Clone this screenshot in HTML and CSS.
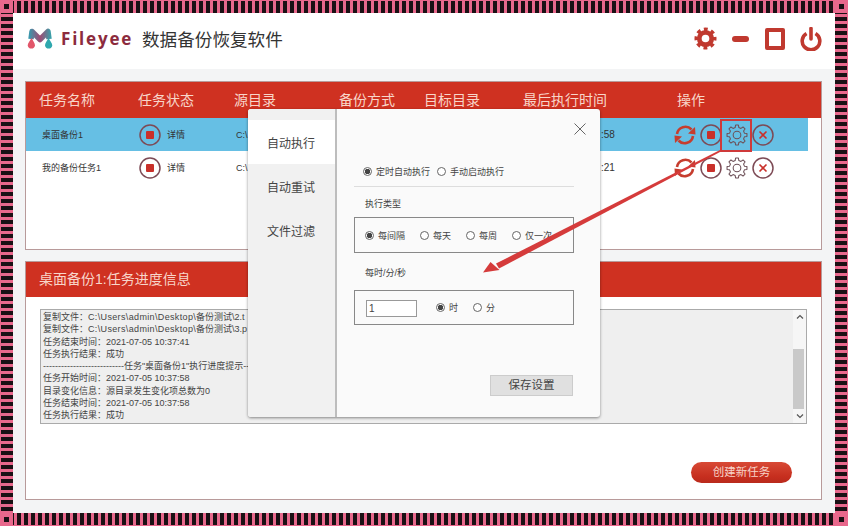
FILE: index.html
```html
<!DOCTYPE html>
<html lang="zh-CN">
<head>
<meta charset="utf-8">
<title>Fileyee 数据备份恢复软件</title>
<link rel="stylesheet" href="styles.css">
</head>
<body>
<svg class="defs">
	<symbol id="i-refresh" viewBox="0 0 22 22">
		<path d="M3 10A8.4 8.4 0 0 1 17.5 5.5M19 12A8.4 8.4 0 0 1 4.5 16.5" fill="none" stroke="#c63d2e" stroke-width="2.6"/>
		<path d="M14 9.5L21.5 10.5 21 3zM8 12.500L.5 11.500 1 19z" fill="#c63d2e"/>
	</symbol>
	<symbol id="i-stop" viewBox="0 0 22 22">
		<circle cx="11" cy="11" r="10" fill="none" stroke="#7d4a55" stroke-width="1.500"/>
		<rect x="7" y="7" width="8" height="8" rx="1" fill="#c9302a"/>
	</symbol>
	<symbol id="i-gear" viewBox="-11.500 -11.500 23 23">
		<path d="M10.4 1.460L7.760 1.940 6.860 4.120 8.390 6.320 6.320 8.390 4.120 6.860 1.940 7.760 1.460 10.400-1.460 10.400-1.940 7.760-4.120 6.860-6.320 8.390-8.390 6.320-6.860 4.120-7.760 1.940-10.400 1.460-10.400-1.460-7.760-1.940-6.860-4.120-8.390-6.320-6.320-8.390-4.120-6.860-1.940-7.760-1.460-10.400 1.460-10.400 1.940-7.760 4.120-6.860 6.320-8.390 8.390-6.320 6.860-4.120 7.760-1.940 10.400-1.460z" fill="none" stroke="#6d5058" stroke-width="1.100" stroke-linejoin="round"/>
		<circle r="4" fill="none" stroke="#6d5058" stroke-width="1.100"/>
	</symbol>
	<symbol id="i-close" viewBox="0 0 22 22">
		<circle cx="11" cy="11" r="10" fill="none" stroke="#7d4a55" stroke-width="1.500"/>
		<path d="M7.500 7.500L14.500 14.500M14.500 7.500L7.500 14.500" stroke="#c9302a" stroke-width="1.600"/>
	</symbol>
	<symbol id="i-up" viewBox="0 0 8 6">
		<path d="M1 4.500L4 1.500 7 4.500" fill="none" stroke="#555" stroke-width="1.200"/>
	</symbol>
	<symbol id="i-down" viewBox="0 0 8 6">
		<path d="M1 1.500L4 4.500 7 1.500" fill="none" stroke="#555" stroke-width="1.200"/>
	</symbol>
</svg>

<div class="frame">
	<div class="app">
		<div class="topbar">
			<svg class="logo" viewBox="0 0 28 24">
				<defs>
					<linearGradient id="logoM" gradientUnits="userSpaceOnUse" x1="2" y1="0" x2="26" y2="0">
						<stop offset="0" stop-color="#2f9fb2"/>
						<stop offset=".5" stop-color="#a04a74"/>
						<stop offset="1" stop-color="#2fa8ae"/>
					</linearGradient>
				</defs>
				<path d="M5 12L6 4.500 14 12.500 22 4.500 23 12" fill="none" stroke="url(#logoM)" stroke-width="5.500" stroke-linejoin="round"/>
				<path d="M5.500 11C7 14 9 16 9 18.500A3.700 3.700 0 0 1 1.700 18.500C1.700 16 4 14 5.500 11z" fill="#e2566a"/>
				<path d="M22.500 11C24 14 26.300 16 26.300 18.500A3.700 3.700 0 0 1 19 18.500C19 16 21 14 22.500 11z" fill="#2fa8ae"/>
			</svg>
			<span class="brand">Fileyee</span>
			<span class="app-title">数据备份恢复软件</span>
			<div class="win-btns">
				<svg class="win-gear" viewBox="-12 -12 24 24">
					<circle r="6.500" fill="none" stroke="#c0392f" stroke-width="5"/>
					<circle r="9.500" fill="none" stroke="#c0392f" stroke-width="4" stroke-dasharray="3.900 3.560" stroke-dashoffset="1.950"/>
				</svg>
				<span class="win-min"></span>
				<span class="win-max"></span>
				<svg class="win-power" viewBox="0 0 22 24">
					<path d="M6.500 6.500A8.800 8.800 0 1 0 15.500 6.500" fill="none" stroke="#c0392f" stroke-width="3.600"/>
					<path d="M11 1.500V12" stroke="#c0392f" stroke-width="3.600" stroke-linecap="round"/>
				</svg>
			</div>
		</div>

		<div class="content">
			<div class="panel task-panel">
				<div class="cols head">
					<span>任务名称</span><span>任务状态</span><span>源目录</span><span>备份方式</span><span>目标目录</span><span>最后执行时间</span><span>操作</span>
				</div>
				<div class="cols row on">
					<span class="name">桌面备份1</span>
					<span class="status"><svg class="ico"><use href="#i-stop"/></svg>详情</span>
					<span class="path">C:\</span>
					<span></span>
					<span></span>
					<span class="time">:58</span>
					<span class="ops">
						<svg class="ico"><use href="#i-refresh"/></svg>
						<svg class="ico"><use href="#i-stop"/></svg>
						<span class="gear-wrap"><svg class="ico"><use href="#i-gear"/></svg><i class="mark"></i></span>
						<svg class="ico"><use href="#i-close"/></svg>
					</span>
				</div>
				<div class="cols row">
					<span class="name">我的备份任务1</span>
					<span class="status"><svg class="ico"><use href="#i-stop"/></svg>详情</span>
					<span class="path">C:\</span>
					<span></span>
					<span></span>
					<span class="time">:21</span>
					<span class="ops">
						<svg class="ico"><use href="#i-refresh"/></svg>
						<svg class="ico"><use href="#i-stop"/></svg>
						<svg class="ico"><use href="#i-gear"/></svg>
						<svg class="ico"><use href="#i-close"/></svg>
					</span>
				</div>
			</div>

			<div class="panel log-panel">
				<div class="log-head">桌面备份1:任务进度信息</div>
				<div class="log-box">
					<div class="log-text">
						<p>复制文件：<span class="file">C:\Users\admin\Desktop\</span>备份测试\2.t</p>
						<p>复制文件：<span class="file">C:\Users\admin\Desktop\</span>备份测试\3.p</p>
						<p>任务结束时间：2021-07-05 10:37:41</p>
						<p>任务执行结果：成功</p>
						<p>---------------------------任务"桌面备份1"执行进度提示--</p>
						<p>任务开始时间：2021-07-05 10:37:58</p>
						<p>目录变化信息：源目录发生变化项总数为0</p>
						<p>任务结束时间：2021-07-05 10:37:58</p>
						<p>任务执行结果：成功</p>
					</div>
					<div class="scroll">
						<svg class="scroll-btn"><use href="#i-up"/></svg>
						<div class="track"><div class="thumb"></div></div>
						<svg class="scroll-btn"><use href="#i-down"/></svg>
					</div>
				</div>
				<div class="log-foot"><a class="create-btn">创建新任务</a></div>
			</div>
		</div>
	</div>

	<div class="modal">
		<div class="side">
			<div class="tab on">自动执行</div>
			<div class="tab">自动重试</div>
			<div class="tab">文件过滤</div>
		</div>
		<div class="main">
			<svg class="close-x" viewBox="0 0 12 12"><path d="M.5 .5L11.500 11.500M11.500 .5L.5 11.500" stroke="#666" stroke-width="1"/></svg>
			<div class="radios mode">
				<label><i class="radio on"></i>定时自动执行</label>
				<label><i class="radio"></i>手动启动执行</label>
			</div>
			<div class="line"></div>
			<div class="label">执行类型</div>
			<div class="group type">
				<label><i class="radio on"></i>每间隔</label>
				<label><i class="radio"></i>每天</label>
				<label><i class="radio"></i>每周</label>
				<label><i class="radio"></i>仅一次</label>
			</div>
			<div class="label second">每时/分/秒</div>
			<div class="group every">
				<span class="num">1</span>
				<label><i class="radio on"></i>时</label>
				<label><i class="radio"></i>分</label>
			</div>
			<a class="save-btn">保存设置</a>
		</div>
	</div>

	<svg class="arrow" viewBox="0 0 848 526">
		<path d="M720 150L721 151.500 499 268.500 496 263.500z" fill="#d53b3b"/>
		<path d="M483 272.500L490.500 262 499.500 270z" fill="#d53b3b"/>
	</svg>
</div>
</body>
</html>
```

FILE: styles.css
```css
*{margin:0; padding:0; box-sizing:border-box; list-style:none;}
body{width:848px; height:526px; overflow:hidden; font-family:"Liberation Sans","Noto Sans CJK SC",sans-serif; color:#444;}
.defs{position:absolute; width:0; height:0;}

/* striped picture border */
.frame{
	position:relative; width:848px; height:526px; padding:13px;
	background:
		linear-gradient(#1a1014,#1a1014) 4px 4px/5px 5px no-repeat,
		linear-gradient(#1a1014,#1a1014) 839px 4px/5px 5px no-repeat,
		linear-gradient(#1a1014,#1a1014) 4px 517px/5px 5px no-repeat,
		linear-gradient(#1a1014,#1a1014) 839px 517px/5px 5px no-repeat,
		linear-gradient(#e8688c,#e8688c) 0 0/13px 13px no-repeat,
		linear-gradient(#e8688c,#e8688c) 835px 0/13px 13px no-repeat,
		linear-gradient(#e8688c,#e8688c) 0 513px/13px 13px no-repeat,
		linear-gradient(#e8688c,#e8688c) 835px 513px/13px 13px no-repeat,
		repeating-linear-gradient(90deg,#e8688c 0 3px,#1a1014 3px 7px) 0 1px/100% 12px no-repeat,
		repeating-linear-gradient(90deg,#e8688c 0 3px,#1a1014 3px 7px) 0 513px/100% 12px no-repeat,
		repeating-linear-gradient(180deg,#e8688c 0 3px,#1a1014 3px 7px) 1px 0/12px 100% no-repeat,
		repeating-linear-gradient(180deg,#e8688c 0 3px,#1a1014 3px 7px) 835px 0/12px 100% no-repeat,
		#e8688c;
}
.app{height:500px; background:#f3f4f5; display:flex; flex-direction:column;}

.topbar{height:56px; background:#fff; display:flex; align-items:center; padding:0 0 5px 13px;}
.logo{width:28px; height:24px;}
.brand{margin-left:7px; width:81px; font:bold 17px "Open Sans",sans-serif; letter-spacing:1.800px; color:#8c2b3d;}
.app-title{font-size:17.600px; color:#333;}
.win-btns{margin-left:auto; display:flex; align-items:center; padding-right:13px;}
.win-gear{width:23px; height:23px;}
.win-min{width:17px; height:6px; margin-left:15px; background:#c0392f; border-radius:3px;}
.win-max{width:20px; height:22px; margin-left:16px; border:4px solid #c0392f; border-radius:2px;}
.win-power{width:22px; height:24px; margin-left:15px;}

.content{flex:1; display:flex; flex-direction:column; gap:11px; padding:12px 13px 13px 12px;}
.panel{background:#fff; border:1px solid #b89a9a;}
.task-panel{height:169px;}
.log-panel{height:239px;}

.cols{display:grid; grid-template-columns:99px 96px 105px 85px 99px 154px 1fr; align-items:center; padding-left:13px;}
.head{height:36px; padding-bottom:3px; background:#cf3121; color:#f8d6ca; font-size:14px;}
.row{height:33px; margin-right:13px; font-size:9px; color:#333;}
.row.on{background:#66bfe4;}
.name{padding-left:3px;}
.status{display:flex; align-items:center; gap:6px; padding-left:1px;}
.path{padding-left:2px;}
.time{padding-left:78px; font-size:10px;}
.ops{display:flex; gap:4px; margin-left:-3px;}
.ico{display:block; width:22px; height:22px;}
.gear-wrap{position:relative; display:block;}
.mark{position:absolute; left:-6px; right:-4px; top:-5px; bottom:-6px; border:2px solid #cf3a3a;}

.log-head{height:35px; padding:0 13px; background:#cf3121; color:#f8d6ca; font-size:14px; line-height:35px;}
.log-box{height:115px; margin:12px 14px 0; background:#efefef; border:1px solid #aaa; display:flex; justify-content:space-between;}
.log-text{padding:1px 0 0 2px; font-size:9px; line-height:12.250px; white-space:nowrap; overflow:hidden; color:#444;}
.file{letter-spacing:.35px;}
.scroll{width:13px; flex:none; background:#f6f6f6; display:flex; flex-direction:column; align-items:center; justify-content:space-between; padding:4px 0;}
.scroll-btn{display:block; width:8px; height:6px;}
.track{flex:1; width:100%; padding-top:29px;}
.thumb{height:60px; width:11px; background:#c9c9c9;}
.log-foot{display:flex; justify-content:flex-end; padding:38px 29px 0 0;}
.create-btn{display:block; width:101px; height:21px; border-radius:11px; background:linear-gradient(#d84a36,#c62e1e 70%,#b92a1c); color:#f7d3c8; font-size:11.500px; line-height:21px; text-align:center;}

/* settings dialog sits over the task list */
.modal{position:absolute; left:248px; top:109px; width:352px; height:308px; display:flex; background:#fafafa; border-radius:3px; overflow:hidden; box-shadow:0 1px 3px rgba(0,0,0,.45);}
.side{width:89px; flex:none; padding-top:11px; background:#f1f1f1; border-right:2px solid #bdbdbd;}
.tab{height:44px; padding-left:19px; font-size:12px; line-height:48px; color:#444;}
.tab.on{background:#fff;}
.main{flex:1; padding:14px 0 0 17px; display:flex; flex-direction:column; font-size:9px; color:#444;}
.close-x{display:block; width:12px; height:12px; margin-left:220px; margin-bottom:30px; flex:none;}
.main label{display:flex; align-items:center; gap:4px;}
.radio{display:block; width:9px; height:9px; flex:none; border:1px solid #666; border-radius:50%; background:#fff;}
.radio.on{background:radial-gradient(circle,#444 0 2.500px,#fff 3px);}
.radios{display:flex; gap:7px; width:220px; height:12px; padding-left:9px; align-items:center;}
.line{width:220px; height:1px; margin-top:9px; background:#ddd;}
.label{height:12px; margin:11px 0 7px 11px; line-height:12px;}
.label.second{margin:14px 0 11px 11px;}
.group{width:220px; border:1px solid #888; display:flex; align-items:center;}
.type{height:36px; padding-left:10px; gap:15px;}
.every{height:35px; padding-left:11px;}
.num{display:block; width:51px; height:17px; margin:1px 19px 0 0; padding-left:2px; background:#fff; border:1px solid #999; font-size:10px; line-height:15px;}
.every label + label{margin-left:15px;}
.save-btn{display:block; width:83px; height:21px; margin:50px 0 0 136px; background:#e0e0e0; border:1px solid #ccc; font-size:11.500px; line-height:19px; text-align:center; color:#444;}

.arrow{position:absolute; left:0; top:0; width:848px; height:526px; pointer-events:none;}
```
